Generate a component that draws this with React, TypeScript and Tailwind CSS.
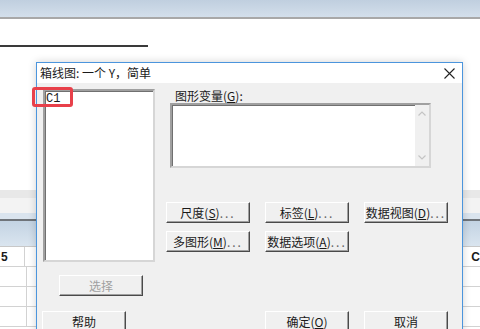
import { FC, ReactNode } from "react";

const WinButton: FC<{ children: ReactNode; disabled?: boolean; className?: string }> = ({
  children,
  disabled,
  className = "",
}) => (
  <div
    className={`w-[84px] h-[21px] flex items-center justify-center text-[12px] leading-none bg-[#f0f0f0] border border-t-white border-l-white border-r-[#4a4a4a] border-b-[#4a4a4a] shadow-[inset_-1px_-1px_0_#a0a0a0] ${
      disabled ? "text-[#a0a0a0]" : "text-[#1a1a1a]"
    } ${className}`}
  >
    {children}
  </div>
);

const Dots = () => <span className="tracking-[2px] text-[#666]">...</span>;

const GridRow: FC<{ left?: string; right?: string; bold?: boolean }> = ({ left, right, bold }) => (
  <div className={`h-[20px] flex border-b border-[#d2d2d2] text-[12px] ${bold ? "font-bold" : ""}`}>
    <div className="w-[27px] border-r border-[#d2d2d2] flex items-center">
      {left && <span className="pl-[1px] font-['Liberation_Sans',sans-serif]">{left}</span>}
    </div>
    <div className="w-[446px] shrink-0" />
    {right && <span className="flex items-center font-['Liberation_Sans',sans-serif]">{right}</span>}
  </div>
);

export default function App() {
  return (
    <div className="relative w-[480px] h-[329px] overflow-hidden bg-white font-['Noto_Sans_CJK_SC',sans-serif] text-[#1a1a1a]">
      {/* background application */}
      <div className="h-[17px] bg-linear-to-b from-[#c0cfdf] to-[#d3dfeb]" />
      <div className="h-[2px] bg-[#a8a8a8]" />
      <div className="h-[26px]" />
      <div className="w-[148px] h-[2px] bg-[#3a3a3a]" />
      <div className="h-[143px]" />
      <div className="h-[8px] bg-[#e8e8e8]" />
      <div className="h-[15px] bg-[#f3f3f3]" />
      <div className="h-[6px] bg-[#dae4ee]" />
      <div className="h-[2px] bg-[#6f747a]" />
      <div className="h-[26px] bg-linear-to-b from-[#c3d3e3] to-[#dae5ef] border-b border-[#c8c8c8]" />
      <GridRow left="5" right="C" bold />
      <GridRow />
      <GridRow />
      <GridRow />

      {/* dialog window */}
      <div className="absolute left-[36px] top-[62px] w-[427px] h-[290px] border border-[#4b95dd] bg-[#f0f0f0] shadow-[0_0_8px_rgba(0,0,0,0.18)] flex flex-col">
        <div className="h-[20px] bg-white flex items-center justify-between pl-[3px] pr-[7px] text-[12px] shrink-0">
          <span>箱线图: 一个 Y，简单</span>
          <svg width="11" height="11" viewBox="0 0 11 11" className="text-[#222]">
            <path d="M0.5 0.5 L10.5 10.5 M10.5 0.5 L0.5 10.5" stroke="currentColor" strokeWidth="1.1" />
          </svg>
        </div>

        <div className="flex pl-[6px] pt-[6px]">
          {/* left column */}
          <div className="flex flex-col w-[112px]">
            <div className="h-[173px] border-2 border-t-[#a0a0a0] border-l-[#a0a0a0] border-r-[#d6d6d6] border-b-[#d6d6d6] bg-white shadow-[inset_1px_1px_0_#707070]">
              <div className="pl-[1px] pt-[1px] text-[12px] leading-[14px] font-['Liberation_Mono',monospace]">C1</div>
            </div>
            <WinButton disabled className="mt-[13px] ml-[16px]">
              选择
            </WinButton>
            <WinButton className="mt-[15px] -ml-px">帮助</WinButton>
          </div>

          {/* right column */}
          <div className="flex flex-col ml-[11px]">
            <div className="h-[14px] pl-[9px] text-[12px] leading-[14px]">
              图形变量(<span className="underline">G</span>):
            </div>
            <div className="ml-[4px] w-[261px] h-[65px] flex border-2 border-t-[#a0a0a0] border-l-[#a0a0a0] border-r-[#d6d6d6] border-b-[#d6d6d6] bg-white shadow-[inset_1px_1px_0_#707070]">
              <div className="flex-1" />
              <div className="w-[14px] bg-[#f0f0f0] flex flex-col items-center justify-between py-[6px]">
                <svg width="8" height="5" viewBox="0 0 8 5">
                  <path d="M0.5 4.5 L4 1 L7.5 4.5" stroke="#c4c4c4" strokeWidth="1.2" fill="none" />
                </svg>
                <svg width="8" height="5" viewBox="0 0 8 5">
                  <path d="M0.5 0.5 L4 4 L7.5 0.5" stroke="#c4c4c4" strokeWidth="1.2" fill="none" />
                </svg>
              </div>
            </div>

            <div className="flex gap-[15px] mt-[34px]">
              <WinButton>
                尺度(<span className="underline">S</span>)<Dots />
              </WinButton>
              <WinButton>
                标签(<span className="underline">L</span>)<Dots />
              </WinButton>
              <WinButton>
                数据视图(<span className="underline">D</span>)<Dots />
              </WinButton>
            </div>
            <div className="flex gap-[15px] mt-[8px]">
              <WinButton>
                多图形(<span className="underline">M</span>)<Dots />
              </WinButton>
              <WinButton>
                数据选项(<span className="underline">A</span>)<Dots />
              </WinButton>
            </div>
            <div className="flex gap-[15px] mt-[59px]">
              <div className="w-[84px]" />
              <WinButton>
                确定(<span className="underline">O</span>)
              </WinButton>
              <WinButton>取消</WinButton>
            </div>
          </div>
        </div>
      </div>

      {/* red highlight annotation */}
      <div className="absolute left-[32px] top-[87px] w-[41px] h-[20px] border-[3px] border-[#e8404a] rounded-[3px]" />
    </div>
  );
}
